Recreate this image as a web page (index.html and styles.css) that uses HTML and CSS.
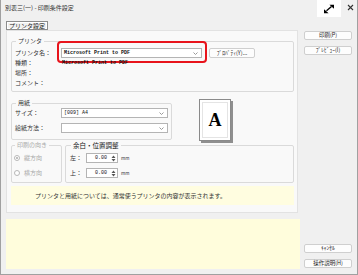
FILE: index.html
```html
<!DOCTYPE html>
<html>
  <head>
    <title>印刷条件設定</title>
    <link rel="stylesheet" href="styles.css">
  </head>
  <body>
    <div class="window">
      <div class="titlebar">
        <div class="title">別表三(一) - 印刷条件設定</div>
        <div class="controls">
          <div class="resize-box">
            <svg viewBox="0 0 14 12" width="12" height="10">
              <path d="M4 8L10 3" stroke="#000" stroke-width="1.6"/>
              <path d="M7.5 0.8h5.5v5z M1 6.2v5h5.5z" fill="#000"/>
            </svg>
          </div>
          <svg class="close-icon" viewBox="0 0 7 7" width="7" height="7"><path d="M1 1L6 6M6 1L1 6" stroke="#333" stroke-width="1.1"/></svg>
        </div>
      </div>
      <div class="content">
        <div class="main">
          <div class="tab">プリンタ設定</div>
          <div class="panel">
            <fieldset class="group printer-group">
              <legend>プリンタ</legend>
              <div class="row">
                <span class="label">プリンタ名：</span>
                <div class="combo printer-combo">
                  <span class="mono bold">Microsoft Print to PDF</span>
                  <svg class="chevron" width="5" height="3"><path d="M0.5 0.5L2.5 2.5L4.5 0.5" stroke="#999" fill="none"/></svg>
                </div>
                <div class="btn prop-btn">ﾌﾟﾛﾊﾟﾃｨ(Y)...</div>
                <!-- red annotation round the printer name -->
                <span class="highlight"></span>
              </div>
              <div class="row">
                <span class="label">種類：</span>
                <span class="value mono bold">Microsoft Print to PDF</span>
              </div>
              <div class="row">
                <span class="label">場所：</span>
              </div>
              <div class="row">
                <span class="label">コメント：</span>
              </div>
            </fieldset>

            <div class="paper-row">
              <fieldset class="group paper-group">
                <legend>用紙</legend>
                <div class="row">
                  <span class="label">サイズ：</span>
                  <div class="combo paper-combo">
                    <span class="mono">[009] A4</span>
                    <svg class="chevron" width="5" height="3"><path d="M0.5 0.5L2.5 2.5L4.5 0.5" stroke="#999" fill="none"/></svg>
                  </div>
                </div>
                <div class="row row-gap">
                  <span class="label">給紙方法：</span>
                  <div class="combo paper-combo">
                    <span></span>
                    <svg class="chevron" width="5" height="3"><path d="M0.5 0.5L2.5 2.5L4.5 0.5" stroke="#999" fill="none"/></svg>
                  </div>
                </div>
              </fieldset>
              <div class="page-icon">
                <div class="page-inner">A</div>
              </div>
            </div>

            <div class="layout-row">
              <fieldset class="group orient-group">
                <legend>印刷の向き</legend>
                <div class="radio-row">
                  <span class="radio checked"></span>
                  <span>縦方向</span>
                </div>
                <div class="radio-row row-gap">
                  <span class="radio"></span>
                  <span>横方向</span>
                </div>
              </fieldset>
              <fieldset class="group margin-group">
                <legend>余白・位置調整</legend>
                <div class="spin-row">
                  <span class="spin-label">左：</span>
                  <div class="spin">
                    <span class="mono">0.00</span>
                    <span class="spin-arrows">
                      <svg width="5" height="7"><path d="M0.5 3L2.5 0.5L4.5 3z M0.5 4L2.5 6.5L4.5 4z" fill="#555"/></svg>
                    </span>
                  </div>
                  <span class="unit">mm</span>
                </div>
                <div class="spin-row row-gap">
                  <span class="spin-label">上：</span>
                  <div class="spin">
                    <span class="mono">0.00</span>
                    <span class="spin-arrows">
                      <svg width="5" height="7"><path d="M0.5 3L2.5 0.5L4.5 3z M0.5 4L2.5 6.5L4.5 4z" fill="#555"/></svg>
                    </span>
                  </div>
                  <span class="unit">mm</span>
                </div>
              </fieldset>
            </div>

            <div class="note">プリンタと用紙については、通常使うプリンタの内容が表示されます。</div>
          </div>
          <div class="message-area"></div>
        </div>

        <div class="side">
          <div class="btn side-btn">印刷(P)</div>
          <div class="btn side-btn next">ﾌﾟﾚﾋﾞｭｰ(I)</div>
          <div class="btn side-btn cancel">ｷｬﾝｾﾙ</div>
          <div class="btn side-btn next">操作説明(H)</div>
        </div>
      </div>
    </div>
  </body>
</html>
```

FILE: styles.css
```css
body {
  margin: 0;
  background-color: #f0f0f0;
}

.window {
  width: 358px;
  height: 275px;
  box-sizing: border-box;
  border: 1px solid #a0a0a0;
  border-top: none;
  background-color: #f0f0f0;
  color: #333;
  font-family: "Noto Sans CJK JP", "Noto Sans", sans-serif;
  font-size: 6px;
  line-height: 8px;
}

.titlebar {
  height: 21px;
  display: flex;
  justify-content: space-between;
  align-items: flex-start;
}

.title {
  padding: 4px 0 0 4px;
  line-height: 7px;
}

.controls {
  display: flex;
  align-items: flex-start;
  padding-right: 3px;
}

.resize-box {
  width: 24px;
  height: 17px;
  background-color: #fff;
  display: flex;
  align-items: center;
  justify-content: center;
}

.close-icon {
  display: block;
  margin: 4px 0 0 6px;
}

.content {
  display: flex;
  padding-left: 5px;
}

.main {
  width: 294px;
}

.tab {
  width: 42px;
  height: 9px;
  box-sizing: border-box;
  border: 1px solid #8c8c8c;
  box-shadow: inset 0 0 0 1px #fff;
  text-align: center;
  line-height: 7px;
  color: #222;
}

.panel {
  width: 292px;
  box-sizing: border-box;
  border: 1px solid #e2e2e2;
  background-color: #f9f9f9;
  padding: 0 3px 7px 4px;
}

.group {
  margin: 0;
  border: 1px solid #dadada;
  border-radius: 2px;
  min-width: 0;
}

.group legend {
  padding: 0 2px;
  margin-left: 1px;
  line-height: 8px;
}

.printer-group {
  margin-top: 6px;
  padding: 3px 4px 3px 3px;
}

.row {
  position: relative;
  height: 10px;
  display: flex;
  align-items: center;
}

.row-gap {
  margin-top: 5px;
}

.label {
  width: 46px;
  flex-shrink: 0;
}

.value {
  padding-left: 1px;
  color: #444;
}

.mono {
  font-family: "Liberation Mono", monospace;
  font-size: 5px;
  color: #111;
}

.bold {
  font-weight: bold;
}

.combo {
  height: 10px;
  box-sizing: border-box;
  border: 1px solid #b4b4b4;
  background-color: #fff;
  display: flex;
  align-items: center;
  justify-content: space-between;
  padding: 0 3px 0 2px;
}

.printer-combo {
  width: 141px;
}

.paper-combo {
  width: 107px;
}

.btn {
  box-sizing: border-box;
  border: 1px solid #cfcfcf;
  border-radius: 2px;
  background-color: #fdfdfd;
  text-align: center;
  color: #222;
  font-size: 5.5px;
}

.prop-btn {
  margin-left: 7px;
  width: 46px;
  height: 10px;
  line-height: 8px;
}

.highlight {
  position: absolute;
  left: 42px;
  top: -7px;
  width: 150px;
  height: 22px;
  box-sizing: border-box;
  border: 2px solid #e8141c;
  border-radius: 4px;
}

.paper-row {
  display: flex;
  align-items: flex-start;
  margin-top: 7px;
}

.paper-group {
  width: 161px;
  box-sizing: border-box;
  padding: 1px 3px 6px 3px;
}

.page-icon {
  margin-left: 27px;
  width: 32px;
  height: 42px;
  box-sizing: border-box;
  border: 1px solid #8a8a8a;
  background-color: #fff;
  box-shadow: 2px 2px 0 #8f8f8f;
  padding: 2px;
}

.page-inner {
  height: 100%;
  box-sizing: border-box;
  border: 1px solid #e4e4e4;
  display: flex;
  align-items: center;
  justify-content: center;
  font-family: "Liberation Serif", serif;
  font-weight: bold;
  font-size: 18px;
  color: #000;
}

.layout-row {
  display: flex;
}

.orient-group {
  width: 51px;
  box-sizing: border-box;
  padding: 4px 2px 4px 2px;
  color: #a8a8a8;
}

.radio-row {
  height: 10px;
  display: flex;
  align-items: center;
}

.radio {
  width: 6px;
  height: 6px;
  box-sizing: border-box;
  border: 1px solid #b8b8b8;
  border-radius: 50%;
  background-color: #fff;
  margin-right: 4px;
  display: flex;
  align-items: center;
  justify-content: center;
}

.radio.checked::after {
  content: "";
  width: 2px;
  height: 2px;
  border-radius: 50%;
  background-color: #aaa;
}

.margin-group {
  margin-left: 3px;
  flex: 1;
  padding: 4px 3px 4px 4px;
}

.margin-group legend {
  color: #111;
  font-size: 6.5px;
}

.spin-row {
  height: 10px;
  display: flex;
  align-items: center;
}

.spin-label {
  width: 16px;
}

.spin {
  width: 32px;
  height: 10px;
  box-sizing: border-box;
  border: 1px solid #b4b4b4;
  background-color: #fff;
  display: flex;
  align-items: center;
  justify-content: flex-end;
}

.spin-arrows {
  width: 7px;
  margin-left: 3px;
  display: flex;
  justify-content: center;
}

.unit {
  margin-left: 3px;
  font-size: 4.5px;
}

.note {
  margin-top: 3px;
  height: 19px;
  background-color: #fffde0;
  padding-left: 24px;
  line-height: 19px;
  color: #333;
}

.message-area {
  margin-top: 6px;
  height: 50px;
  background-color: #fffddc;
}

.side {
  margin-left: 4px;
  padding-top: 10px;
  width: 48px;
}

.side-btn {
  height: 9px;
  line-height: 7px;
}

.side-btn.next {
  margin-top: 6px;
}

.side-btn.cancel {
  margin-top: 189px;
}
```
